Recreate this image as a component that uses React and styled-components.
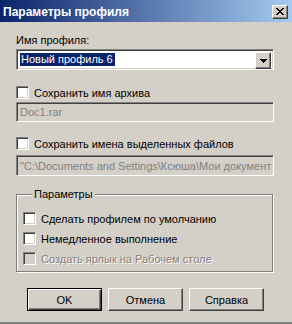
import React from 'react';
import styled, { createGlobalStyle, css } from 'styled-components';

const GlobalStyle = createGlobalStyle`
  html, body {
    margin: 0;
    padding: 0;
    background: #d4d0c8;
  }
  body {
    font-family: "Liberation Sans", Arial, sans-serif;
    font-size: 11px;
    color: #000;
  }
`;

const raised = css`
  border: 1px solid;
  border-color: #fff #404040 #404040 #fff;
  box-shadow: inset -1px -1px #808080;
  background: #d4d0c8;
`;

const sunken = css`
  border: 1px solid;
  border-color: #808080 #fff #fff #808080;
  box-shadow: inset 1px 1px #404040, inset -1px -1px #d4d0c8;
`;

const App = () => {
  return (
    <>
      <GlobalStyle />
      <Window>
        <TitleBar>
          <Title>Параметры профиля</Title>
          <CloseButton>
            <svg width="8" height="7" viewBox="0 0 8 7">
              <path d="M0 0h2v1h1v1h2V1h1V0h2v1H7v1H6v1H5v1h1v1h1v1h1v1H6V6H5V5H3v1H2v1H0V6h1V5h1V4h1V3H2V2H1V1H0z" fill="#000" />
            </svg>
          </CloseButton>
        </TitleBar>

        <Body>
          <Label>Имя профиля:</Label>
          <Combo>
            <ComboValue>
              <Selected>Новый профиль 6</Selected>
            </ComboValue>
            <DropButton>
              <svg width="7" height="4" viewBox="0 0 7 4">
                <path d="M0 0h7v1H6v1H5v1H4v1H3V3H2V2H1V1H0z" fill="#000" />
              </svg>
            </DropButton>
          </Combo>

          <CheckRow $top={16}>
            <Box />
            <span>Сохранить имя архива</span>
          </CheckRow>
          <Field $top={3} $h={20}>Doc1.rar</Field>

          <CheckRow $top={15}>
            <Box />
            <span>Сохранить имена выделенных файлов</span>
          </CheckRow>
          <Field $top={5} $h={21}>"C:\Documents and Settings\Ксюша\Мои документ</Field>

          <Group>
            <Legend>Параметры</Legend>
            <GroupRows>
              <CheckRow $inGroup>
                <Box />
                <span>Сделать профилем по умолчанию</span>
              </CheckRow>
              <CheckRow $inGroup>
                <Box />
                <span>Немедленное выполнение</span>
              </CheckRow>
              <CheckRow $inGroup $disabled>
                <Box $disabled />
                <span>Создать ярлык на Рабочем столе</span>
              </CheckRow>
            </GroupRows>
          </Group>

          <Buttons>
            <Button $default>OK</Button>
            <Button>Отмена</Button>
            <Button>Справка</Button>
          </Buttons>
        </Body>
      </Window>
    </>
  );
};

const Window = styled.div`
  width: 292px;
  height: 324px;
  box-sizing: border-box;
  background: #d4d0c8;
  border-bottom: 2px solid #808080;
  overflow: hidden;
`;

const TitleBar = styled.div`
  height: 22px;
  display: flex;
  align-items: center;
  justify-content: space-between;
  padding: 0 4px 0 3px;
  background: linear-gradient(to right, #0a246a, #a6caf0);
`;

const Title = styled.div`
  color: #fff;
  font-weight: bold;
  font-size: 12px;
  line-height: 14px;
  margin-top: 1px;
`;

const CloseButton = styled.div`
  ${raised};
  box-sizing: border-box;
  width: 16px;
  height: 14px;
  display: flex;
  align-items: center;
  justify-content: center;
  margin-top: 1px;
`;

const Body = styled.div`
  padding: 0 18px 0 16px;
`;

const Label = styled.div`
  margin-top: 12px;
  line-height: 13px;
`;

const Combo = styled.div`
  ${sunken};
  margin-top: 2px;
  height: 21px;
  box-sizing: border-box;
  background: #fff;
  display: flex;
  padding: 2px;
`;

const ComboValue = styled.div`
  flex: 1;
  display: flex;
  padding: 1px 1px;
`;

const Selected = styled.span`
  background: #0a246a;
  color: #fff;
  line-height: 13px;
  padding: 0 2px 0 1px;
`;

const DropButton = styled.div`
  ${raised};
  box-sizing: border-box;
  width: 16px;
  height: 17px;
  display: flex;
  align-items: center;
  justify-content: center;
`;

const CheckRow = styled.label`
  display: flex;
  align-items: center;
  gap: 5px;
  height: 13px;
  margin-top: ${p => (p.$top ? `${p.$top}px` : '0')};
  color: ${p => (p.$disabled ? '#808080' : '#000')};
  text-shadow: ${p => (p.$disabled ? '1px 1px #fff' : 'none')};
  white-space: nowrap;
`;

const Box = styled.span`
  ${sunken};
  box-sizing: border-box;
  width: 13px;
  height: 13px;
  flex: none;
  background: ${p => (p.$disabled ? '#d4d0c8' : '#fff')};
`;

const Field = styled.div`
  ${sunken};
  box-sizing: border-box;
  margin-top: ${p => p.$top}px;
  height: ${p => p.$h}px;
  background: #d4d0c8;
  color: #808080;
  padding: 0 3px;
  display: flex;
  align-items: center;
  white-space: nowrap;
  overflow: hidden;
`;

const Group = styled.fieldset`
  margin: 12px 1px 0 0;
  padding: 11px 6px 6px 6px;
  border: 1px solid #808080;
  box-shadow: inset 1px 1px #fff, 1px 1px #fff;
  min-width: 0;
`;

const Legend = styled.legend`
  margin-left: 9px;
  padding: 0 2px;
  line-height: 13px;
  background: #d4d0c8;
`;

const GroupRows = styled.div`
  display: flex;
  flex-direction: column;
  gap: 7px;
`;

const Buttons = styled.div`
  display: flex;
  gap: 6px;
  margin: 16px 0 0 11px;
`;

const Button = styled.div`
  ${raised};
  box-sizing: border-box;
  width: 75px;
  height: 23px;
  display: flex;
  align-items: center;
  justify-content: center;
  ${p =>
    p.$default &&
    css`
      border: 1px solid #000;
      box-shadow: inset 1px 1px #fff, inset -1px -1px #404040, inset -2px -2px #808080;
    `}
`;

export default App;
